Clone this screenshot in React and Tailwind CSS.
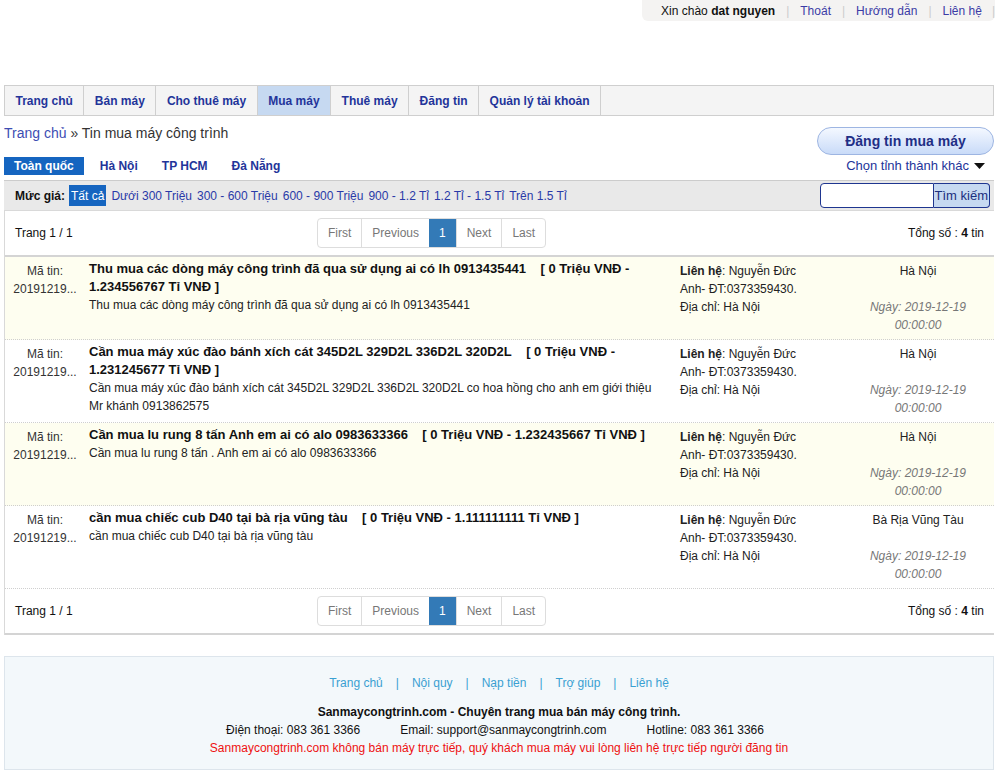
const listings = [
  {
    title: 'Thu mua các dòng máy công trình đã qua sử dụng ai có lh 0913435441',
    price: '[ 0 Triệu VNĐ - 1.234556767 Tỉ VNĐ ]',
    desc: 'Thu mua các dòng máy công trình đã qua sử dụng ai có lh 0913435441',
    place: 'Hà Nội',
    alt: true,
  },
  {
    title: 'Cần mua máy xúc đào bánh xích cát 345D2L 329D2L 336D2L 320D2L',
    price: '[ 0 Triệu VNĐ - 1.231245677 Tỉ VNĐ ]',
    desc: 'Cần mua máy xúc đào bánh xích cát 345D2L 329D2L 336D2L 320D2L co hoa hồng cho anh em giới thiệu Mr khánh 0913862575',
    place: 'Hà Nội',
    alt: false,
  },
  {
    title: 'Cần mua lu rung 8 tấn Anh em ai có alo 0983633366',
    price: '[ 0 Triệu VNĐ - 1.232435667 Tỉ VNĐ ]',
    desc: 'Cần mua lu rung 8 tấn . Anh em ai có alo 0983633366',
    place: 'Hà Nội',
    alt: true,
  },
  {
    title: 'cần mua chiếc cub D40 tại bà rịa vũng tàu',
    price: '[ 0 Triệu VNĐ - 1.111111111 Tỉ VNĐ ]',
    desc: 'cần mua chiếc cub D40 tại bà rịa vũng tàu',
    place: 'Bà Rịa Vũng Tàu',
    alt: false,
  },
];

const navItems = ['Trang chủ', 'Bán máy', 'Cho thuê máy', 'Mua máy', 'Thuê máy', 'Đăng tin', 'Quản lý tài khoản'];
const prices = ['Dưới 300 Triệu', '300 - 600 Triệu', '600 - 900 Triệu', '900 - 1.2 Tỉ', '1.2 Tỉ - 1.5 Tỉ', 'Trên 1.5 Tỉ'];

function Pager() {
  return (
    <div className="flex items-center px-[10px] h-[46px] border-b-2 border-[#d4d4d4]">
      <span className="w-[302px] text-[12px] text-[#111]">Trang 1 / 1</span>
      <div className="flex h-[30px] border border-[#ddd] rounded text-[12px] text-[#777]">
        <span className="flex items-center px-[10px]">First</span>
        <span className="flex items-center px-[10px] border-l border-[#ddd]">Previous</span>
        <span className="flex items-center px-[10px] bg-[#337ab7] text-white">1</span>
        <span className="flex items-center px-[10px] border-l border-[#ddd]">Next</span>
        <span className="flex items-center px-[10px] border-l border-[#ddd]">Last</span>
      </div>
      <span className="flex-1 text-right text-[12px] text-[#111]">
        Tổng số : <b>4</b> tin
      </span>
    </div>
  );
}

export default function App() {
  return (
    <div className="w-[997px] min-h-[778px] bg-white font-['Liberation_Sans',Arial,sans-serif] text-[12px] text-[#222]">
      {/* top bar */}
      <div className="flex justify-end pr-[2px]">
        <div className="flex items-center h-[21px] pl-[19px] bg-[#f4f3f2] rounded-b-[6px] text-[12px]">
          <span className="text-[#111]">Xin chào <b>dat nguyen</b></span>
          <span className="mx-[11px] text-[#ccc]">|</span>
          <span className="text-[#3b3ba6]">Thoát</span>
          <span className="mx-[11px] text-[#ccc]">|</span>
          <span className="text-[#3b3ba6]">Hướng dẫn</span>
          <span className="mx-[11px] text-[#ccc]">|</span>
          <span className="text-[#3b3ba6]">Liên hệ</span>
          <span className="ml-[10px] text-[#ccc]">|</span>
        </div>
      </div>

      <div className="px-[4px] pr-[3px]">
        {/* nav */}
        <div className="mt-[64px] flex h-[31px] border border-[#cfcfcf] bg-[#f4f4f4] text-[12px] font-bold text-[#23349a]">
          {navItems.map((n) => (
            <div
              key={n}
              className={
                'flex items-center px-[10.5px] border-r border-[#cfcfcf] ' +
                (n === 'Mua máy' ? 'bg-[#c6d9f1]' : '')
              }
            >
              {n}
            </div>
          ))}
        </div>

        {/* breadcrumb + button */}
        <div className="flex justify-between items-start mt-[8px]">
          <div className="text-[14px] leading-[18px] text-[#333]">
            <span className="text-[#3d4db3]">Trang chủ</span> » Tin mua máy công trình
          </div>
          <div className="mt-[3px] flex items-center justify-center w-[177px] h-[28px] rounded-full border border-[#9db5e2] bg-gradient-to-b from-[#f4f8ff] to-[#c9dbf8] text-[14px] font-bold text-[#1f2f86]">
            Đăng tin mua máy
          </div>
        </div>

        {/* regions */}
        <div className="flex justify-between items-center mt-[2px] h-[18px]">
          <div className="flex items-center h-full text-[12px] font-bold text-[#23349a]">
            <span className="flex items-center h-full px-[10px] bg-[#1565c0] text-white">Toàn quốc</span>
            <span className="px-[12px] ml-[4px]">Hà Nội</span>
            <span className="px-[12px]">TP HCM</span>
            <span className="px-[12px]">Đà Nẵng</span>
          </div>
          <div className="flex items-center gap-[5px] pr-[9px] text-[13px] text-[#23349a]">
            Chọn tỉnh thành khác
            <svg width="11" height="7" viewBox="0 0 11 7">
              <path d="M0 0h11L5.5 6z" fill="#111" />
            </svg>
          </div>
        </div>

        {/* price filter */}
        <div className="flex items-center justify-between mt-[5px] h-[30px] bg-[#e9e9e9] border-t border-[#cccccc] pl-[11px] pr-[4px]">
          <div className="flex items-center text-[12px]">
            <b className="text-[#111] mr-[4px]">Mức giá:</b>
            <span className="flex items-center h-[21px] px-[2px] bg-[#1565c0] text-white">Tất cả</span>
            {prices.map((p) => (
              <span key={p} className="ml-[5px] text-[#2a3aa8]">{p}</span>
            ))}
          </div>
          <div className="flex h-[25px]">
            <input className="w-[114px] h-full border border-[#1f3690] rounded-l-[4px] bg-white" />
            <span className="flex items-center px-[1px] h-full border border-l-0 border-[#1f3690] rounded-r-[4px] bg-[#c6d9f1] text-[13px] text-[#1a2f7e]">
              Tìm kiếm
            </span>
          </div>
        </div>

        {/* listings */}
        <div className="border-l border-t border-[#d9d9d9]">
          <Pager />
          {listings.map((l, i) => (
            <div
              key={i}
              className={
                'grid grid-cols-[80px_583px_183px_1fr] h-[83px] pt-[3px] border-b border-dotted border-[#cfcfcf] leading-[18px] ' +
                (l.alt ? 'bg-[#fefef0]' : 'bg-white')
              }
            >
              <div className="text-center text-[12px] text-[#333] pt-[2px]">
                Mã tin:
                <br />
                20191219...
              </div>
              <div className="pl-[4px] pr-[8px]">
                <div className="text-[13px] font-bold text-[#111]">
                  {l.title}&nbsp;&nbsp;&nbsp;&nbsp;{l.price}
                </div>
                <div className="text-[12px] text-[#222]">{l.desc}</div>
              </div>
              <div className="pl-[12px] pr-[30px] pt-[2px] text-[12px] text-[#222]">
                <b>Liên hệ</b>: Nguyễn Đức Anh- ĐT:0373359430.
                <br />
                Địa chỉ: Hà Nội
              </div>
              <div className="pr-[12px] pl-[3px] pt-[2px] text-center text-[12px]">
                <div className="text-[#222]">{l.place}</div>
                <div className="mt-[18px] italic text-[#777] px-[4px]">Ngày: 2019-12-19 00:00:00</div>
              </div>
            </div>
          ))}
          <Pager />
        </div>

        {/* footer */}
        <div className="mt-[21px] h-[114px] border border-[#dde5ec] bg-[#f3f8fb] text-center text-[12px] pt-[17px]">
          <div className="flex justify-center items-center text-[#3aa0d2]">
            <span>Trang chủ</span>
            <span className="mx-[13px]">|</span>
            <span>Nội quy</span>
            <span className="mx-[13px]">|</span>
            <span>Nạp tiền</span>
            <span className="mx-[13px]">|</span>
            <span>Trợ giúp</span>
            <span className="mx-[13px]">|</span>
            <span>Liên hệ</span>
          </div>
          <div className="mt-[11px] leading-[18px]">
            <div className="font-bold text-[#111]">Sanmaycongtrinh.com - Chuyên trang mua bán máy công trình.</div>
            <div className="flex justify-center gap-[40px] text-[#111] pr-[8px]">
              <span>Điện thoại: 083 361 3366</span>
              <span>Email: support@sanmaycongtrinh.com</span>
              <span>Hotline: 083 361 3366</span>
            </div>
            <div className="text-[#ee1111]">
              Sanmaycongtrinh.com không bán máy trực tiếp, quý khách mua máy vui lòng liên hệ trực tiếp người đăng tin
            </div>
          </div>
        </div>
      </div>
    </div>
  );
}
